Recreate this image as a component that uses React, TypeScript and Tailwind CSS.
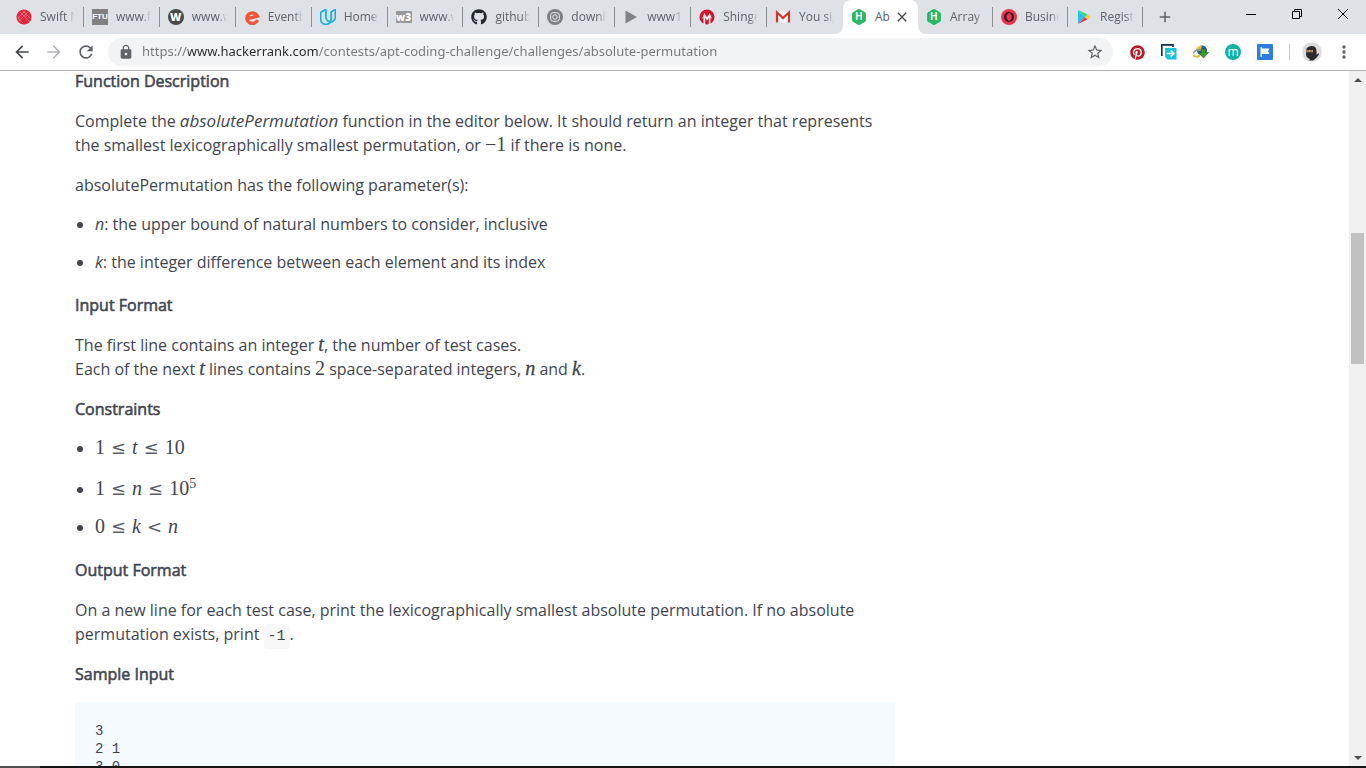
import { useState, type ReactNode } from "react";
import { FaGithub, FaPinterest } from "react-icons/fa6";
import { SiUdacity, SiOpera } from "react-icons/si";
import { MdArrowBack, MdArrowForward, MdRefresh, MdLock, MdStarBorder, MdMoreVert, MdAdd, MdClose } from "react-icons/md";

function SwiftIcon() {
  return (
    <svg viewBox="0 0 16 16" className="size-4">
      <circle cx="8" cy="8" r="7.600" fill="#e3263a" />
      <path
        d="M4 3l9.500 9.500M6.500 1.500l8 8M1.500 8.500l5.500 5.500M12 3l-9.500 9.500M9.500 1.500l-8 8"
        stroke="#f29aa4"
        strokeWidth="0.600"
      />
    </svg>
  );
}

function EventIcon() {
  return (
    <svg viewBox="0 0 16 16" className="size-4">
      <path
        d="M2.500 9.800 L13.500 7 A5.600 5.300 0 1 0 13.600 11.200"
        fill="none"
        stroke="#f05537"
        strokeWidth="3.400"
      />
    </svg>
  );
}

function SpiralIcon() {
  return (
    <svg viewBox="0 0 16 16" className="size-4">
      <circle cx="8" cy="8" r="8" fill="#7d7f82" />
      <rect x="3.700" y="3.700" width="8.600" height="8.600" rx="2.500" fill="none" stroke="#e8eaed" strokeWidth="1" />
      <circle cx="8" cy="8" r="2.200" fill="none" stroke="#e8eaed" strokeWidth="1" />
    </svg>
  );
}

function TriangleIcon() {
  return (
    <svg viewBox="0 0 16 16" className="size-4">
      <path d="M2.500 1.500L14 8L2.500 14.500Z" fill="#7f8285" />
    </svg>
  );
}

function ShingleIcon() {
  return (
    <svg viewBox="0 0 16 16" className="size-4">
      <circle cx="8" cy="8" r="7.500" fill="#d5122b" />
      <path d="M4.500 16V8.500L3 10l2.200-6L8 8.200 10.800 4 13 10l-1.500-1.500V16L9.800 16V9L8 11.500 6.200 9v7z" fill="#f6e9ec" />
    </svg>
  );
}

function MailIcon() {
  return (
    <svg viewBox="0 0 16 16" className="size-4">
      <path d="M2 2.500h12v11H2z" fill="#f3f3f3" />
      <path d="M2 13.500V3.500L8 9l6-5.500v10" fill="none" stroke="#d2382d" strokeWidth="2.200" />
    </svg>
  );
}

function StoreIcon() {
  return (
    <svg viewBox="0 0 16 16" className="size-4">
      <path d="M2 1v14l7-7z" fill="#20c4f4" />
      <path d="M2 1l7 7 2.500-2.500z" fill="#2fd67a" />
      <path d="M2 15l7-7 2.500 2.500z" fill="#e8384f" />
      <path d="M11.500 5.500L9 8l2.500 2.500L15 8z" fill="#fcc934" />
    </svg>
  );
}

function HexIcon() {
  return (
    <span className="grid size-4 place-items-center font-['Liberation_Sans',sans-serif] text-[10px] font-bold leading-none text-white">
      <svg viewBox="0 0 16 16" className="col-start-1 row-start-1 size-4">
        <path d="M8 0q.6 0 1 .3l5 2.900q.9.500.9 1.500v6.600q0 1-.9 1.500l-5 2.900q-1 .6-2 0l-5-2.900q-.9-.5-.9-1.500V4.700q0-1 .9-1.500L7 .3Q7.400 0 8 0z" fill="#27b862" />
      </svg>
      <span className="col-start-1 row-start-1">H</span>
    </span>
  );
}

const tabs: { title: string; icon: ReactNode; active?: boolean }[] = [
  { title: "Swift N", icon: <SwiftIcon /> },
  {
    title: "www.fr",
    icon: (
      <span className="grid size-4 place-items-center bg-[#808080] font-['Liberation_Sans',sans-serif] text-[8px] font-bold text-white">
        FTU
      </span>
    ),
  },
  {
    title: "www.w",
    icon: (
      <span className="grid size-4 place-items-center rounded-full bg-[#464b48] font-['Open_Sans',sans-serif] text-[11px] font-extrabold text-white">
        W
      </span>
    ),
  },
  { title: "Eventb", icon: <EventIcon /> },
  { title: "Home", icon: <SiUdacity className="size-4 text-[#12b0e0]" stroke="currentColor" strokeWidth={1.2} /> },
  {
    title: "www.w",
    icon: (
      <span className="grid h-3 w-4 place-items-center bg-[#999] font-['Open_Sans',sans-serif] text-[10px] font-extrabold leading-3 text-white">
        w3
      </span>
    ),
  },
  { title: "github", icon: <FaGithub className="size-4 text-[#24292e]" /> },
  { title: "downlo", icon: <SpiralIcon /> },
  { title: "www1.", icon: <TriangleIcon /> },
  { title: "Shinge", icon: <ShingleIcon /> },
  { title: "You sig", icon: <MailIcon /> },
  { title: "Ab", icon: <HexIcon />, active: true },
  { title: "Array M", icon: <HexIcon /> },
  {
    title: "Busine",
    icon: (
      <span className="grid size-4 place-items-center rounded-full bg-[#e8364f] text-[#3d1220]">
        <SiOpera className="size-2.5" />
      </span>
    ),
  },
  { title: "Registe", icon: <StoreIcon /> },
];

const activeIndex = tabs.findIndex((tab) => tab.active);

function TabStrip() {
  return (
    <header className="flex h-[34px] shrink-0 bg-[#dee1e6] pl-2 text-[#5f6368]">
      <nav aria-label="Tabs" className="flex min-w-0 max-w-[1135px] flex-1">
        {tabs.map((tab, i) => {
          if (tab.active) {
            return (
              <div key={i} className="relative flex min-w-0 shrink grow-[75] basis-0 items-center rounded-t-lg bg-white pl-2">
                <svg viewBox="0 0 8 8" className="absolute -left-2 bottom-0 size-2">
                  <path d="M8 0v8H0a8 8 0 0 0 8-8z" fill="#fff" />
                </svg>
                <svg viewBox="0 0 8 8" className="absolute -right-2 bottom-0 size-2">
                  <path d="M0 0v8h8a8 8 0 0 1-8-8z" fill="#fff" />
                </svg>
                <button className="flex min-w-0 flex-1 items-center gap-2">
                  {tab.icon}
                  <span className="whitespace-nowrap text-left">{tab.title}</span>
                </button>
                <button aria-label="Close tab" className="mr-2 text-[#45494d]">
                  <MdClose className="size-4" />
                </button>
              </div>
            );
          }
          return (
            <button
              key={i}
              className={
                i < activeIndex
                  ? "flex min-w-0 shrink grow-[76] basis-0 items-center gap-2 pl-2"
                  : "flex min-w-0 shrink grow-[75] basis-0 items-center gap-2 pl-2"
              }
            >
              <span className="flex size-4 shrink-0 items-center">{tab.icon}</span>
              <span className="min-w-0 flex-1 whitespace-nowrap text-left [mask-image:linear-gradient(to_right,black_75%,transparent)]">
                {tab.title}
              </span>
              <span className={i === activeIndex - 1 ? "h-5 w-px" : "h-5 w-px bg-[#8b8e92]"} />
            </button>
          );
        })}
      </nav>
      <button aria-label="New tab" className="grid w-11 place-items-center">
        <MdAdd className="size-[18px]" />
      </button>
      <div className="ml-auto flex h-7 text-black">
        <button aria-label="Minimize" className="grid w-[46px] place-items-center">
          <span className="h-px w-2.5 bg-black" />
        </button>
        <button aria-label="Restore" className="grid w-[46px] place-items-center">
          <svg viewBox="0 0 10 10" className="size-2.5" fill="none" stroke="currentColor">
            <path d="M.5 2.500h7v7h-7zM2.500 2.500v-2h7v7h-2" />
          </svg>
        </button>
        <button aria-label="Close window" className="grid w-[46px] place-items-center">
          <svg viewBox="0 0 10 10" className="size-2.5" fill="none" stroke="currentColor">
            <path d="M0 0l10 10M10 0L0 10" />
          </svg>
        </button>
      </div>
    </header>
  );
}

function ToolButton({ label, children }: { label: string; children: ReactNode }) {
  return (
    <button aria-label={label} className="grid size-6 shrink-0 place-items-center">
      {children}
    </button>
  );
}

function Toolbar() {
  const [url, setUrl] = useState(
    "https://www.hackerrank.com/contests/apt-coding-challenge/challenges/absolute-permutation",
  );
  return (
    <div className="flex h-[37px] shrink-0 items-center gap-2 border-b border-[#b4b2b4] bg-white px-2.5 text-[#5f6368]">
      <ToolButton label="Back">
        <MdArrowBack className="size-5 text-[#46494d]" />
      </ToolButton>
      <ToolButton label="Forward">
        <MdArrowForward className="size-5 text-[#b4b6b9]" />
      </ToolButton>
      <ToolButton label="Reload">
        <MdRefresh className="size-5" />
      </ToolButton>
      <div className="ml-0.5 flex h-7 min-w-0 flex-1 items-center rounded-full bg-[#f1f3f4] pl-2.5 pr-1.5">
        <MdLock className="size-4 shrink-0" />
        <input
          aria-label="Address"
          value={url}
          onChange={(e) => setUrl(e.target.value)}
          className="ml-2 min-w-0 flex-1 bg-[linear-gradient(to_right,#72777c_46px,#26292d_46px,#26292d_176px,#72777c_176px)] bg-clip-text font-['Noto_Sans',sans-serif] text-[13px] text-transparent outline-none"
        />
        <ToolButton label="Bookmark">
          <MdStarBorder className="size-[18px]" />
        </ToolButton>
      </div>
      <div className="ml-1 flex items-center gap-2">
        <ToolButton label="Pinterest">
          <FaPinterest className="size-[15px] text-[#bd1826]" />
        </ToolButton>
        <ToolButton label="Copy to">
          <svg viewBox="0 0 16 16" className="size-4">
            <path d="M.8 12V.8H12V3" fill="none" stroke="#14324a" strokeWidth="1.700" />
            <path d="M4 4h11.500v11.500H6.500L4 13z" fill="#17c5dd" />
            <path d="M5.500 9.500h7M9.800 6.500l3 3-3 3" fill="none" stroke="#fff" strokeWidth="1.700" />
          </svg>
        </ToolButton>
        <ToolButton label="Download manager">
          <svg viewBox="0 0 16 16" className="size-4">
            <circle cx="9" cy="6.500" r="5" fill="#235aa0" />
            <path d="M3 6a6 5 0 0 1 6-4.500L7.500 7z" fill="#f2c230" />
            <path d="M.5 9.500a7 4.500 0 0 1 9-4" fill="none" stroke="#8d9ba3" strokeWidth="1.600" />
            <path d="M.5 11.500c2 2 4.500 1.500 6.500-.5" fill="none" stroke="#e0b52f" strokeWidth="1.800" />
            <path d="M8.500 5h4v3.500H15.500L10.500 14 5.500 8.500h3z" fill="#3a9b2e" stroke="#176a1c" strokeWidth=".6" />
          </svg>
        </ToolButton>
        <ToolButton label="Mail extension">
          <span className="grid size-4 place-items-center rounded-full bg-[#12b2a6] font-['Open_Sans',sans-serif] text-xs leading-3 text-white">
            m
          </span>
        </ToolButton>
        <ToolButton label="Flag">
          <svg viewBox="0 0 16 16" className="size-4">
            <rect width="16" height="16" rx="1" fill="#2b7de0" />
            <path d="M3.500 3h1.300v1.500H12.500l-1.500 2.700 1.500 2.800H4.800v3H3.500z" fill="#fff" />
          </svg>
        </ToolButton>
      </div>
      <span className="ml-1 mr-0.5 h-4 w-px bg-[#c9cbce]" />
      <ToolButton label="Profile">
        <svg viewBox="0 0 20 20" className="size-5">
          <circle cx="10" cy="10" r="9.800" fill="#dcdcdc" />
          <path d="M4.500 6.500Q6 4 9.500 4q5 0 5 5v4l2-2 .5 1.500q-2.500 4-6 6H7l1-1.500Q4 16 4 12z" fill="#2b2b2d" />
          <path d="M4.500 8h6.500v2.200H4.500z" fill="#c99a72" />
          <path d="M5.500 9h1.200M8.500 9h1.200" stroke="#222" strokeWidth=".8" />
        </svg>
      </ToolButton>
      <ToolButton label="Menu">
        <MdMoreVert className="size-5" />
      </ToolButton>
    </div>
  );
}

function Heading({ children }: { children: ReactNode }) {
  return <h3 className="my-[18px] leading-5 [-webkit-text-stroke:0.035em] first:mt-0">{children}</h3>;
}

function Para({ children }: { children: ReactNode }) {
  return <p className="my-4 leading-6">{children}</p>;
}

function List({ children }: { children: ReactNode }) {
  return <ul className="mb-[22px] mt-4 list-disc space-y-4 pl-5 leading-[22px]">{children}</ul>;
}

function Num({ children }: { children: ReactNode }) {
  return <span className="font-['Liberation_Serif',serif] text-xl leading-none">{children}</span>;
}

function Var({ children, bold }: { children: ReactNode; bold?: boolean }) {
  return (
    <var
      className={
        bold
          ? "font-['Liberation_Serif',serif] text-xl italic leading-none [-webkit-text-stroke:0.015em]"
          : "font-['Liberation_Serif',serif] text-xl italic leading-none"
      }
    >
      {children}
    </var>
  );
}

function Rel({ children }: { children: ReactNode }) {
  return <span className="mx-1.5 font-['DejaVu_Sans',sans-serif] text-lg leading-none text-[#5b5f69]">{children}</span>;
}

function Problem() {
  return (
    <main className="min-w-0 flex-1 overflow-hidden pl-[75px] font-['Open_Sans',sans-serif] text-base text-[#41454f]">
      <article className="max-w-[820px]">
        <Heading>Function Description</Heading>
        <Para>
          Complete the <em className="text-[17px] leading-none">absolutePermutation</em> function in the editor below. It
          should return an integer that represents the smallest lexicographically smallest permutation, or{" "}
          <Num>−1</Num> if there is none.
        </Para>
        <Para>absolutePermutation has the following parameter(s):</Para>
        <List>
          <li>
            <em>n</em>: the upper bound of natural numbers to consider, inclusive
          </li>
          <li>
            <em>k</em>: the integer difference between each element and its index
          </li>
        </List>
        <Heading>Input Format</Heading>
        <Para>
          The first line contains an integer <Var bold>t</Var>, the number of test cases.
          <br />
          Each of the next <Var bold>t</Var> lines contains <Num>2</Num> space-separated integers, <Var bold>n</Var> and{" "}
          <Var bold>k</Var>.
        </Para>
        <Heading>Constraints</Heading>
        <List>
          <li>
            <Num>1</Num>
            <Rel>≤</Rel>
            <Var>t</Var>
            <Rel>≤</Rel>
            <Num>10</Num>
          </li>
          <li className="pt-[3px]">
            <Num>1</Num>
            <Rel>≤</Rel>
            <Var>n</Var>
            <Rel>≤</Rel>
            <Num>
              10<sup className="text-sm leading-none">5</sup>
            </Num>
          </li>
          <li>
            <Num>0</Num>
            <Rel>≤</Rel>
            <Var>k</Var>
            <Rel>&lt;</Rel>
            <Var>n</Var>
          </li>
        </List>
        <Heading>Output Format</Heading>
        <Para>
          On a new line for each test case, print the lexicographically smallest absolute permutation. If no absolute
          permutation exists, print{" "}
          <code className="rounded-sm bg-[#f8f8f9] p-1 font-['Liberation_Mono',monospace] text-[15px] leading-none">-1</code>.
        </Para>
        <Heading>Sample Input</Heading>
        <pre className="bg-[#f4faff] p-5 font-['Liberation_Mono',monospace] text-sm leading-[18px]">
          {"3\n2 1\n3 0\n3 2"}
        </pre>
      </article>
    </main>
  );
}

function Scrollbar() {
  return (
    <aside aria-label="Scrollbar" className="flex w-[17px] shrink-0 flex-col bg-[#f1f1f1] text-[#505050]">
      <button aria-label="Scroll up" className="grid h-[17px] place-items-center">
        <svg viewBox="0 0 8 4" className="h-1 w-2">
          <path d="M0 4l4-4 4 4z" fill="currentColor" />
        </svg>
      </button>
      <div className="flex flex-1 flex-col px-0.5">
        <span className="grow-[145]" />
        <span className="grow-[131] bg-[#c1c1c1]" />
        <span className="grow-[385]" />
      </div>
      <button aria-label="Scroll down" className="grid h-[17px] place-items-center">
        <svg viewBox="0 0 8 4" className="h-1 w-2">
          <path d="M0 0l4 4 4-4z" fill="currentColor" />
        </svg>
      </button>
    </aside>
  );
}

export default function App() {
  return (
    <div className="flex h-screen flex-col overflow-hidden bg-white font-['Open_Sans',sans-serif] text-xs">
      <TabStrip />
      <Toolbar />
      <div className="flex min-h-0 flex-1">
        <Problem />
        <Scrollbar />
      </div>
      <footer className="h-0.5 shrink-0 bg-[#151515]">
        <div className="h-full w-10 bg-[#505050]" />
      </footer>
    </div>
  );
}
